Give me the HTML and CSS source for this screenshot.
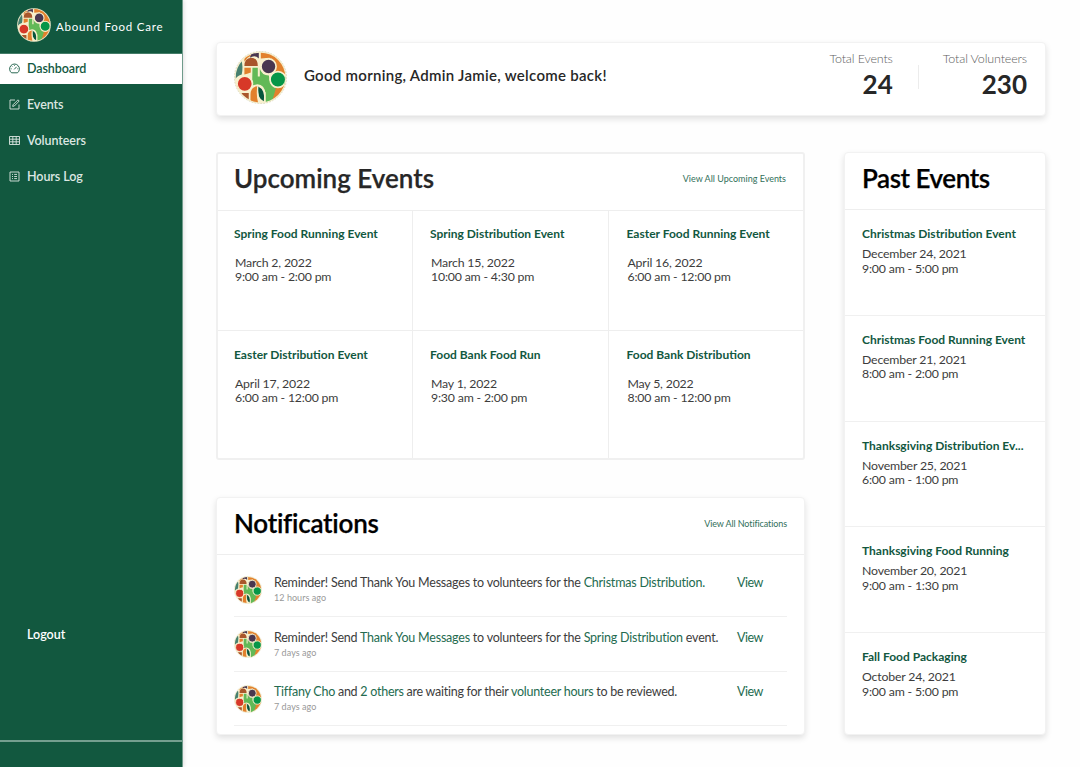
FILE: index.html
```html
<!DOCTYPE html>
<html lang="en">
<head>
<meta charset="utf-8">
<title>Abound Food Care</title>
<link rel="stylesheet" href="styles.css">
</head>
<body>
<svg class="defs" aria-hidden="true">
  <symbol id="logo" viewBox="26 28 158 158">
    <clipPath id="disc"><circle cx="105" cy="107" r="74"/></clipPath>
    <circle cx="105" cy="107" r="78" fill="#f6efcf"/>
    <g clip-path="url(#disc)">
      <rect x="26" y="28" width="158" height="158" fill="#f8f0cd"/>
      <path d="M106 28H184V100L150 92L132 48L106 50Z" fill="#e2812d"/>
      <path d="M142 138L184 124V160L138 186Z" fill="#e2812d"/>
      <path d="M73 48L80 28H100V50Q88 38 73 48Z" fill="#493750"/>
      <path d="M57 48Q62 38 72 36L76 42Q63 48 57 60Z" fill="#e2812d"/>
      <path d="M48 55Q54 75 49 98Q36 101 30 112V80Z" fill="#46806f"/>
      <path d="M57 73Q57 49 77 48Q97 49 97 73Z" fill="#a9562b"/>
      <path d="M57 78H76V92Q64 96 57 98Z" fill="#e2812d"/>
      <path d="M81 78H97V104H103V80Q108 100 130 101Q132 134 151 139L137 186H120V155Q117 128 96 127L80 131Z" fill="#62b957"/>
      <path d="M75 183V158Q76 134 96 133Q91 155 98 183Z" fill="#e2812d"/>
      <path d="M97 133Q120 144 115 178Q94 169 97 133Z" fill="#07543d"/>
      <path d="M97 133Q94 160 104 182M118 150V184M72 150V184" fill="none" stroke="#f8f0cd" stroke-width="4"/>
      <path d="M48 153H70V180L46 164Z" fill="#a9562b"/>
      <g stroke="#f8f0cd" stroke-width="5">
        <circle cx="129" cy="74" r="22.5" fill="#493750"/>
        <circle cx="157" cy="113" r="23.5" fill="#069648"/>
        <circle cx="58" cy="126" r="23" fill="#d73828"/>
      </g>
    </g>
    <circle cx="105" cy="107" r="78" fill="none" stroke="#c6c4a9" stroke-width="1.5" stroke-dasharray="5 4"/>
  </symbol>
</svg>
<div class="app">
  <aside class="sidebar">
    <div class="brand"><svg class="brand-logo"><use href="#logo"/></svg><span class="brand-name">Abound Food Care</span></div>
    <nav class="nav">
      <a class="nav-item active"><svg class="icon" viewBox="0 0 11 11"><path d="M2.5 9.8A4.9 4.9 0 1 1 8.5 9.8Z"/><path d="M5.2 6.4L7.6 3.8M5.5 1.9V2.7M2.8 3L3.3 3.5M1.8 5.8H2.6M8.4 5.8H9.2"/></svg>Dashboard</a>
      <a class="nav-item"><svg class="icon" viewBox="0 0 11 11"><path d="M6 1H1V10H10V5.5"/><path d="M3.7 7.4L4 5.8L9 .8L10.2 2L5.3 7Z"/></svg>Events</a>
      <a class="nav-item"><svg class="icon" viewBox="0 0 11 11"><path d="M.5 1.5H10.5V9.5H.5ZM.5 4.2H10.5M.5 6.8H10.5M3.8 1.5V9.5M7.2 1.5V9.5"/></svg>Volunteers</a>
      <a class="nav-item"><svg class="icon" viewBox="0 0 11 11"><path d="M1 1H10V10H1ZM3 3.4H4M5.2 3.4H8M3 5.5H4M5.2 5.5H8M3 7.6H4M5.2 7.6H8"/></svg>Hours Log</a>
    </nav>
    <a class="logout">Logout</a>
    <div class="sidebar-foot"></div>
  </aside>
  <main class="main">
    <header class="card welcome">
      <svg class="welcome-logo"><use href="#logo"/></svg>
      <h1 class="greeting">Good morning, Admin Jamie, welcome back!</h1>
      <div class="stat"><span class="stat-label">Total Events</span><strong class="stat-value">24</strong></div>
      <div class="stat stat-divided"><span class="stat-label">Total Volunteers</span><strong class="stat-value">230</strong></div>
    </header>
    <div class="columns">
      <div class="left">
        <section class="upcoming">
          <div class="panel-head"><h2 class="title title-soft">Upcoming Events</h2><a class="view-all">View All Upcoming Events</a></div>
          <div class="event-grid">
            <article class="event"><h3 class="event-name">Spring Food Running Event</h3><p class="when">March 2, 2022<br>9:00 am - 2:00 pm</p></article>
            <article class="event"><h3 class="event-name">Spring Distribution Event</h3><p class="when">March 15, 2022<br>10:00 am - 4:30 pm</p></article>
            <article class="event"><h3 class="event-name">Easter Food Running Event</h3><p class="when">April 16, 2022<br>6:00 am - 12:00 pm</p></article>
            <article class="event"><h3 class="event-name">Easter Distribution Event</h3><p class="when">April 17, 2022<br>6:00 am - 12:00 pm</p></article>
            <article class="event"><h3 class="event-name">Food Bank Food Run</h3><p class="when">May 1, 2022<br>9:30 am - 2:00 pm</p></article>
            <article class="event"><h3 class="event-name">Food Bank Distribution</h3><p class="when">May 5, 2022<br>8:00 am - 12:00 pm</p></article>
          </div>
        </section>
        <section class="card notifications">
          <div class="panel-head"><h2 class="title title-notes">Notifications</h2><a class="view-all view-notes">View All Notifications</a></div>
          <ul class="notes">
            <li class="note"><svg class="note-logo"><use href="#logo"/></svg><div class="note-body"><p class="note-text">Reminder! Send Thank You Messages to volunteers for the <a>Christmas Distribution.</a></p><p class="ago">12 hours ago</p></div><a class="view">View</a></li>
            <li class="note"><svg class="note-logo"><use href="#logo"/></svg><div class="note-body"><p class="note-text">Reminder! Send <a>Thank You Messages</a> to volunteers for the <a>Spring Distribution</a> event.</p><p class="ago">7 days ago</p></div><a class="view">View</a></li>
            <li class="note"><svg class="note-logo"><use href="#logo"/></svg><div class="note-body"><p class="note-text note-tight"><a>Tiffany Cho</a> and <a>2 others</a> are waiting for their <a>volunteer hours</a> to be reviewed.</p><p class="ago">7 days ago</p></div><a class="view">View</a></li>
          </ul>
        </section>
      </div>
      <section class="card past">
        <div class="panel-head"><h2 class="title title-past">Past Events</h2></div>
        <article class="past-event"><h3 class="event-name">Christmas Distribution Event</h3><p class="when">December 24, 2021<br>9:00 am - 5:00 pm</p></article>
        <article class="past-event"><h3 class="event-name">Christmas Food Running Event</h3><p class="when">December 21, 2021<br>8:00 am - 2:00 pm</p></article>
        <article class="past-event"><h3 class="event-name">Thanksgiving Distribution Ev...</h3><p class="when">November 25, 2021<br>6:00 am - 1:00 pm</p></article>
        <article class="past-event"><h3 class="event-name">Thanksgiving Food Running</h3><p class="when">November 20, 2021<br>9:00 am - 1:30 pm</p></article>
        <article class="past-event"><h3 class="event-name">Fall Food Packaging</h3><p class="when">October 24, 2021<br>9:00 am - 5:00 pm</p></article>
      </section>
    </div>
  </main>
</div>
</body>
</html>
```
FILE: styles.css
```css
* { box-sizing: border-box; }
body { margin: 0; background: #fefefe; color: #272727; font-family: Lato, "Open Sans", sans-serif; overflow: hidden; }
h1, h2, h3, p, ul { margin: 0; padding: 0; }
.defs { position: absolute; width: 0; height: 0; }
.app { display: flex; height: 767px; }

.sidebar { display: flex; flex-direction: column; width: 183px; flex: none; background: #12583f; color: #fff; border-right: 1px solid #6f9b8b; box-shadow: 1px 0 4px rgba(0,0,0,.12); }
.brand { display: flex; align-items: center; gap: 5px; height: 54px; padding: 0 0 4px 17px; border-bottom: 1px solid #447c68; font-size: 11.5px; letter-spacing: .78px; white-space: nowrap; }
.brand-logo { width: 34px; height: 34px; flex: none; }
.brand-name { padding-top: 3px; }
.nav { display: flex; flex-direction: column; gap: 6px; }
.nav-item { display: flex; align-items: center; gap: 7px; height: 30px; padding: 0 0 1px 9px; font-size: 12.5px; font-weight: 600; letter-spacing: -.08px; color: #dce7e2; }
.nav-item.active { background: #fff; color: #12583f; }
.icon { width: 11px; height: 11px; fill: none; stroke: currentColor; stroke-width: .9; }
.logout { margin: auto 0 96px 27px; font-size: 12.5px; line-height: 18px; font-weight: 600; }
.sidebar-foot { height: 27px; border-top: 2px solid #749f8f; }

.main { flex: 1; padding: 42px 34px 0 33px; }
.card { background: #fff; border: 1px solid #f2f2f2; border-radius: 4px; box-shadow: 0 3px 6px rgba(0,0,0,.12); }
.welcome { display: flex; height: 74px; padding: 0 18px 0 17px; }
.welcome-logo { width: 53px; height: 53px; margin-top: 8px; }
.greeting { margin: 21px auto 0 17px; font-size: 15px; line-height: 22px; font-weight: 600; letter-spacing: .29px; }
.stat { display: flex; flex-direction: column; align-items: flex-end; padding-top: 7px; }
.stat-divided { margin-left: 25px; padding-left: 25px; background: linear-gradient(#ececec, #ececec) 0 22px / 1px 24px no-repeat; }
.stat-label { font-size: 12.5px; line-height: 18px; font-weight: 300; letter-spacing: -.13px; color: #606060; }
.stat-value { font-size: 26px; line-height: 32px; font-weight: 700; }

.columns { display: flex; justify-content: space-between; padding-top: 36px; }
.left { width: 589px; }
.upcoming { height: 308px; border: 2px solid #f0f0f0; border-radius: 3px; background: #fff; }
.panel-head { display: flex; justify-content: space-between; align-items: center; height: 57px; padding: 0 17px; border-bottom: 1px solid #eee; }
.title { font-size: 26px; line-height: 34px; font-weight: 600; color: #000; padding-bottom: 7px; white-space: nowrap; -webkit-text-stroke: .25px currentColor; }
.title-soft { color: #272727; padding-bottom: 9px; margin-left: -1px; }
.title-notes { letter-spacing: -.25px; }
.title-past { letter-spacing: -.45px; }
.view-all { padding-bottom: 8px; font-size: 9px; color: #32705a; white-space: nowrap; }
.view-notes { padding-bottom: 5px; letter-spacing: -.1px; }
.event-grid { display: grid; grid-template: 120px 127px / 195px 196px 194px; }
.event { padding: 14px 0 0 16px; border-right: 1px solid #eee; border-bottom: 1px solid #eee; }
.event:nth-child(3n+2) { padding-left: 17px; }
.event:nth-child(3n) { border-right: 0; padding-left: 17.5px; }
.event:nth-child(n+4) { border-bottom: 0; padding-top: 15px; }
.event-name { font-size: 12px; line-height: 18px; font-weight: 700; color: #12583f; white-space: nowrap; }
.when { font-size: 12.3px; line-height: 14.5px; letter-spacing: -.18px; color: #3d3d3d; white-space: nowrap; }
.event .when { padding: 12.5px 0 0 1px; }

.notifications { height: 238px; margin-top: 37px; }
.notes { list-style: none; padding: 8px 17px 0; }
.note { display: flex; height: 54.4px; border-bottom: 1px solid #f0f0f0; }
.note-logo { width: 28px; height: 28px; margin: 13px 12px 0 0; flex: none; }
.note-body { width: 463px; padding-top: 11.4px; }
.note-text { font-size: 12.5px; line-height: 18px; letter-spacing: -.21px; color: #3d3d3d; white-space: nowrap; }
.note-tight { letter-spacing: -.26px; }
.note-text a, .view { color: #246b50; }
.ago { font-size: 9px; line-height: 12.6px; letter-spacing: .05px; color: #999; }
.view { padding-top: 11.4px; font-size: 12.5px; line-height: 18px; letter-spacing: -.5px; }

.past { width: 202px; height: 583px; }
.past .panel-head { padding-left: 17px; }
.past-event { height: 105.8px; padding: 15px 0 0 17px; border-bottom: 1px solid #f0f0f0; }
.past-event:last-child { border-bottom: 0; }
.past-event .when { padding-top: 4px; }
```
